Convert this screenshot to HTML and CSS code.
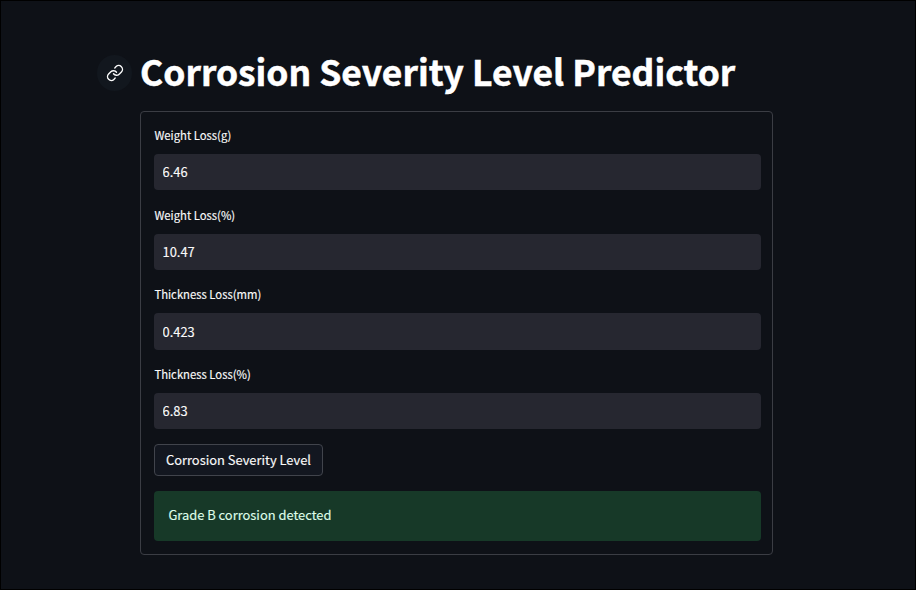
FILE: index.html
```html
<!DOCTYPE html>
<html lang="en">
<head>
<meta charset="utf-8">
<title>Corrosion Severity Level Predictor</title>
<link rel="stylesheet" href="styles.css">
</head>
<body>
<main class="page">
  <header class="heading">
    <a class="anchor" href="#predictor" aria-label="Link to heading">
      <svg width="18" height="18" viewBox="0 0 24 24" fill="none" stroke="currentColor" stroke-width="1.9" stroke-linecap="round" stroke-linejoin="round"><path d="M10 13a5 5 0 0 0 7.54.54l3-3a5 5 0 0 0-7.07-7.07l-1.72 1.71"/><path d="M14 11a5 5 0 0 0-7.54-.54l-3 3a5 5 0 0 0 7.07 7.07l1.71-1.71"/></svg>
    </a>
    <h1 class="title" id="predictor">Corrosion Severity Level Predictor</h1>
  </header>
  <form class="form">
    <div class="field"><label class="label" for="wg">Weight Loss(g)</label><input class="input" id="wg" value="6.46"></div>
    <div class="field"><label class="label" for="wp">Weight Loss(%)</label><input class="input" id="wp" value="10.47"></div>
    <div class="field"><label class="label" for="tm">Thickness Loss(mm)</label><input class="input" id="tm" value="0.423"></div>
    <div class="field"><label class="label" for="tp">Thickness Loss(%)</label><input class="input" id="tp" value="6.83"></div>
    <button class="button" type="button">Corrosion Severity Level</button>
    <div class="alert" role="alert">Grade B corrosion detected</div>
  </form>
</main>
</body>
</html>
```
FILE: styles.css
```css
* { box-sizing: border-box; }
body {
  margin: 0;
  background: #0e1117;
  color: #fafafa;
  font-family: "Noto Sans CJK SC", "Open Sans", sans-serif;
  font-size: 12.9px;
}
.page {
  height: 590px;
  border: 1px solid #000;
  padding: 50px 142px 0 96px;
}
.heading {
  display: flex;
  align-items: center;
  gap: 8px;
  height: 44px;
}
.anchor {
  display: flex;
  align-items: center;
  justify-content: center;
  width: 35px;
  height: 36px;
  border-radius: 50%;
  background: #12171e;
  color: #fafafa;
}
.title {
  margin: 0;
  padding-bottom: 4px;
  font-size: 35.45px;
  line-height: 44px;
  font-weight: 700;
  color: #fff;
  -webkit-text-stroke: 0.5px #fff;
  white-space: nowrap;
}
.form {
  display: flex;
  flex-direction: column;
  align-items: stretch;
  gap: 14.4px;
  width: 633px;
  height: 444px;
  margin: 16px 0 0 43px;
  padding: 13.06px 11px 12px 13px;
  border: 1px solid #3b3d44;
  border-radius: 4px;
}
.field { display: flex; flex-direction: column; }
.label {
  height: 28.85px;
  padding-left: 0.4px;
  line-height: 20px;
  font-size: 11.3px;
  -webkit-text-stroke: 0.15px currentColor;
}
.input {
  width: 100%;
  height: 36.48px;
  padding: 0 8.5px 0.7px;
  border: 0;
  border-radius: 4px;
  outline: 0;
  background: #262730;
  color: #fafafa;
  font: inherit;
  -webkit-text-stroke: 0.15px currentColor;
}
.button {
  align-self: flex-start;
  width: 169px;
  height: 32.4px;
  padding: 0 0 1px;
  border: 1px solid #41444c;
  border-radius: 4px;
  background: #131720;
  color: #fafafa;
  font: inherit;
  -webkit-text-stroke: 0.15px currentColor;
  white-space: nowrap;
}
.alert {
  height: 50px;
  padding: 0 14.4px;
  border-radius: 4px;
  background: #173928;
  color: #dffde9;
  line-height: 48px;
  -webkit-text-stroke: 0.15px currentColor;
}
```
